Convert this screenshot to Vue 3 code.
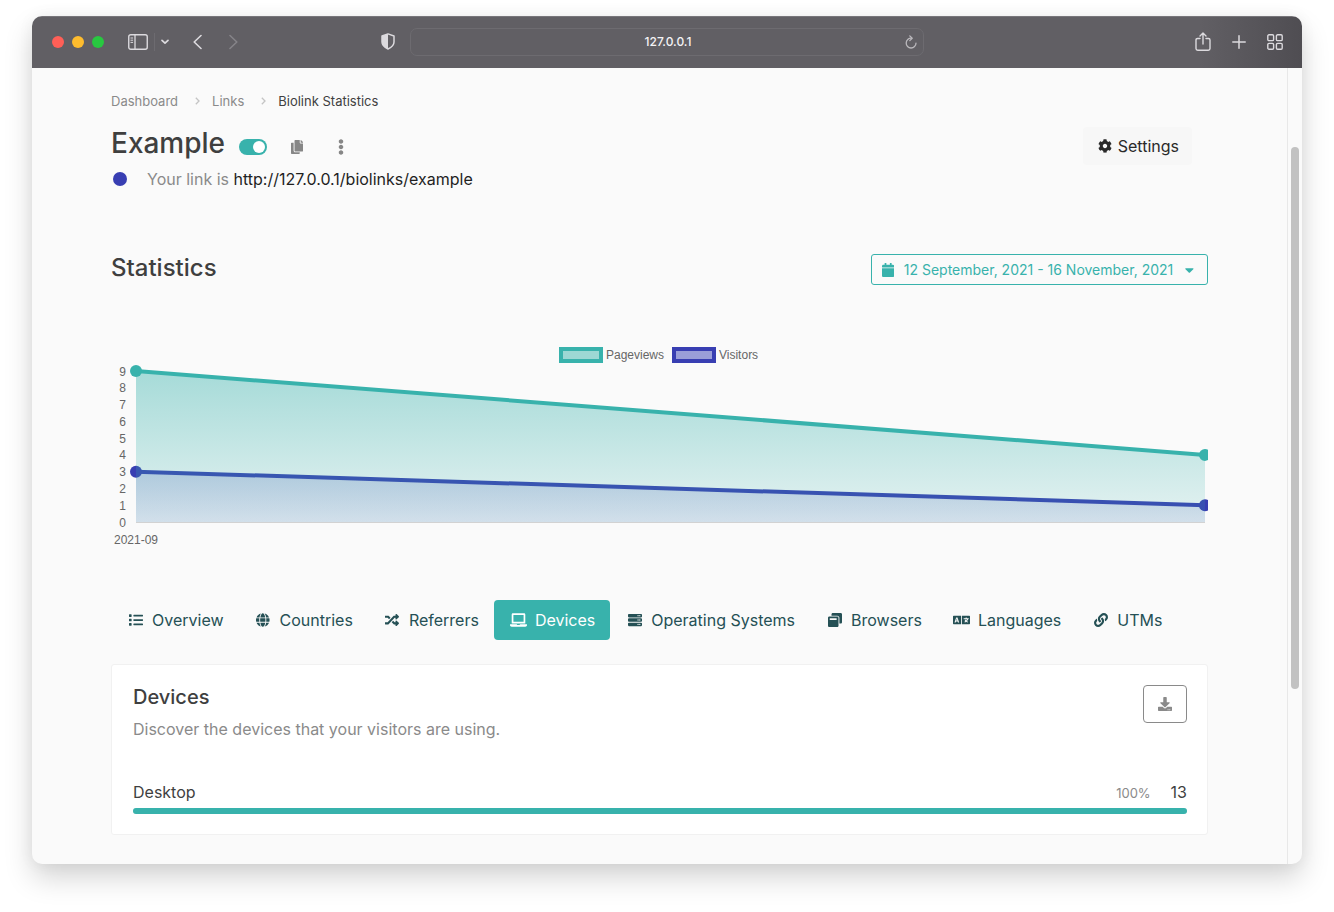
<script setup>
import { computed, ref } from 'vue'

const icons = {
  copy: { w: 448, d: 'M320 448v40c0 13.255-10.745 24-24 24H24c-13.255 0-24-10.745-24-24V120c0-13.255 10.745-24 24-24h72v296c0 30.879 25.121 56 56 56h168zm0-344V0H152c-13.255 0-24 10.745-24 24v368c0 13.255 10.745 24 24 24h272c13.255 0 24-10.745 24-24V128H344c-13.2 0-24-10.8-24-24zm120.971-31.029L375.029 7.029A24 24 0 0 0 358.059 0H352v96h96v-6.059a24 24 0 0 0-7.029-16.97z' },
  dots: { w: 192, d: 'M96 184c39.8 0 72 32.2 72 72s-32.2 72-72 72-72-32.2-72-72 32.2-72 72-72zM24 80c0 39.8 32.2 72 72 72s72-32.2 72-72S135.8 8 96 8 24 40.2 24 80zm0 352c0 39.8 32.2 72 72 72s72-32.2 72-72-32.2-72-72-72-72 32.2-72 72z' },
  cog: { w: 512, d: 'M487.4 315.7l-42.6-24.6c4.3-23.2 4.3-47 0-70.2l42.6-24.6c4.9-2.8 7.1-8.6 5.5-14-11.1-35.6-30-67.8-54.7-94.6-3.8-4.1-10-5.1-14.8-2.3L380.8 110c-17.9-15.4-38.5-27.3-60.8-35.1V25.8c0-5.6-3.9-10.5-9.4-11.7-36.7-8.2-74.3-7.8-109.2 0-5.5 1.2-9.4 6.1-9.4 11.7V75c-22.2 7.9-42.8 19.8-60.8 35.1L88.7 85.5c-4.9-2.8-11-1.9-14.8 2.3-24.7 26.7-43.6 58.9-54.7 94.6-1.7 5.4.6 11.2 5.5 14L67.3 221c-4.3 23.2-4.3 47 0 70.2l-42.6 24.6c-4.9 2.8-7.1 8.6-5.5 14 11.1 35.6 30 67.8 54.7 94.6 3.8 4.1 10 5.1 14.8 2.3l42.6-24.6c17.9 15.4 38.5 27.3 60.8 35.1v49.2c0 5.6 3.9 10.5 9.4 11.7 36.7 8.2 74.3 7.8 109.2 0 5.5-1.2 9.4-6.1 9.4-11.7v-49.2c22.2-7.9 42.8-19.8 60.8-35.1l42.6 24.6c4.9 2.8 11 1.9 14.8-2.3 24.7-26.7 43.6-58.9 54.7-94.6 1.5-5.5-.7-11.3-5.6-14.1zM256 336c-44.1 0-80-35.9-80-80s35.9-80 80-80 80 35.9 80 80-35.9 80-80 80z' },
  calendar: { w: 448, d: 'M12 192h424c6.6 0 12 5.4 12 12v260c0 26.5-21.5 48-48 48H48c-26.5 0-48-21.5-48-48V204c0-6.6 5.4-12 12-12zm436-44v-36c0-26.5-21.5-48-48-48h-48V12c0-6.6-5.4-12-12-12h-40c-6.6 0-12 5.4-12 12v52H160V12c0-6.6-5.4-12-12-12h-40c-6.6 0-12 5.4-12 12v52H48C21.5 64 0 85.5 0 112v36c0 6.6 5.4 12 12 12h424c6.6 0 12-5.4 12-12z' },
  caret: { w: 320, d: 'M31.3 192h257.3c17.8 0 26.7 21.5 14.1 34.1L174.1 354.8c-7.8 7.8-20.5 7.8-28.3 0L17.2 226.1C4.6 213.5 13.5 192 31.3 192z' },
  download: { w: 512, d: 'M216 0h80c13.3 0 24 10.7 24 24v168h87.7c17.8 0 26.7 21.5 14.1 34.1L269.7 378.3c-7.5 7.5-19.8 7.5-27.3 0L90.1 226.1c-12.6-12.6-3.7-34.1 14.1-34.1H192V24c0-13.3 10.7-24 24-24zm296 376v112c0 13.3-10.7 24-24 24H24c-13.3 0-24-10.7-24-24V376c0-13.3 10.7-24 24-24h146.7l49 49c20.1 20.1 52.5 20.1 72.6 0l49-49H488c13.3 0 24 10.7 24 24zm-124 88c0-11-9-20-20-20s-20 9-20 20 9 20 20 20 20-9 20-20zm64 0c0-11-9-20-20-20s-20 9-20 20 9 20 20 20 20-9 20-20z' },
  list: { w: 512, d: 'M80 368H16a16 16 0 0 0-16 16v64a16 16 0 0 0 16 16h64a16 16 0 0 0 16-16v-64a16 16 0 0 0-16-16zm0-320H16A16 16 0 0 0 0 64v64a16 16 0 0 0 16 16h64a16 16 0 0 0 16-16V64a16 16 0 0 0-16-16zm0 160H16a16 16 0 0 0-16 16v64a16 16 0 0 0 16 16h64a16 16 0 0 0 16-16v-64a16 16 0 0 0-16-16zm416 176H176a16 16 0 0 0-16 16v32a16 16 0 0 0 16 16h320a16 16 0 0 0 16-16v-32a16 16 0 0 0-16-16zm0-320H176a16 16 0 0 0-16 16v32a16 16 0 0 0 16 16h320a16 16 0 0 0 16-16V80a16 16 0 0 0-16-16zm0 160H176a16 16 0 0 0-16 16v32a16 16 0 0 0 16 16h320a16 16 0 0 0 16-16v-32a16 16 0 0 0-16-16z' },
  globe: { w: 496, d: 'M336.5 160C322 70.7 287.8 8 248 8s-74 62.7-88.5 152h177zM152 256c0 22.2 1.2 43.5 3.3 64h185.3c2.1-20.5 3.3-41.8 3.3-64s-1.2-43.5-3.3-64H155.3c-2.1 20.5-3.3 41.8-3.3 64zm324.7-96c-28.6-67.9-86.5-120.4-158-141.6 24.4 33.8 41.2 84.7 50 141.6h108zM177.2 18.4C105.8 39.6 47.8 92.1 19.3 160h108c8.7-56.9 25.5-107.8 49.9-141.6zM487.4 192H372.7c2.1 21 3.3 42.5 3.3 64s-1.2 43-3.3 64h114.6c5.5-20.5 8.6-41.8 8.6-64s-3.1-43.5-8.5-64zM120 256c0-21.5 1.2-43 3.3-64H8.6C3.2 212.5 0 233.8 0 256s3.2 43.5 8.6 64h114.6c-2-21-3.2-42.5-3.2-64zm39.5 96c14.5 89.3 48.7 152 88.5 152s74-62.7 88.5-152h-177zm159.3 141.6c71.4-21.2 129.4-73.7 158-141.6h-108c-8.8 56.9-25.6 107.8-50 141.6zM19.3 352c28.6 67.9 86.5 120.4 158 141.6-24.4-33.8-41.2-84.7-50-141.6h-108z' },
  random: { w: 512, d: 'M504.971 359.029c9.373 9.373 9.373 24.569 0 33.941l-80 79.984c-15.01 15.01-40.971 4.49-40.971-16.971V416h-58.785a12.004 12.004 0 0 1-8.773-3.812l-70.556-75.596 53.333-57.143L352 336h32v-39.981c0-21.438 25.943-31.998 40.971-16.971l80 79.981zM12 176h84l52.781 56.551 53.333-57.143-70.556-75.596A11.999 11.999 0 0 0 122.785 96H12c-6.627 0-12 5.373-12 12v56c0 6.627 5.373 12 12 12zm372 0v39.984c0 21.46 25.961 31.98 40.971 16.971l80-79.984c9.373-9.373 9.373-24.569 0-33.941l-80-79.981C409.943 24.021 384 34.582 384 56.019V96h-58.785a12.004 12.004 0 0 0-8.773 3.812L96 336H12c-6.627 0-12 5.373-12 12v56c0 6.627 5.373 12 12 12h110.785c3.326 0 6.503-1.381 8.773-3.812L352 176h32z' },
  laptop: { w: 640, d: 'M624 416H381.54c-.74 19.81-14.71 32-32.74 32H288c-18.69 0-33.02-17.47-32.77-32H16c-8.8 0-16 7.2-16 16v16c0 35.2 28.8 64 64 64h512c35.2 0 64-28.8 64-64v-16c0-8.8-7.2-16-16-16zM576 48c0-26.4-21.6-48-48-48H112C85.6 0 64 21.6 64 48v336h512V48zm-64 272H128V64h384v256z' },
  server: { w: 512, d: 'M480 160H32c-17.673 0-32-14.327-32-32V64c0-17.673 14.327-32 32-32h448c17.673 0 32 14.327 32 32v64c0 17.673-14.327 32-32 32zm-48-88c-13.255 0-24 10.745-24 24s10.745 24 24 24 24-10.745 24-24-10.745-24-24-24zm-64 0c-13.255 0-24 10.745-24 24s10.745 24 24 24 24-10.745 24-24-10.745-24-24-24zm112 248H32c-17.673 0-32-14.327-32-32v-64c0-17.673 14.327-32 32-32h448c17.673 0 32 14.327 32 32v64c0 17.673-14.327 32-32 32zm-48-88c-13.255 0-24 10.745-24 24s10.745 24 24 24 24-10.745 24-24-10.745-24-24-24zm-64 0c-13.255 0-24 10.745-24 24s10.745 24 24 24 24-10.745 24-24-10.745-24-24-24zm112 248H32c-17.673 0-32-14.327-32-32v-64c0-17.673 14.327-32 32-32h448c17.673 0 32 14.327 32 32v64c0 17.673-14.327 32-32 32zm-48-88c-13.255 0-24 10.745-24 24s10.745 24 24 24 24-10.745 24-24-10.745-24-24-24zm-64 0c-13.255 0-24 10.745-24 24s10.745 24 24 24 24-10.745 24-24-10.745-24-24-24z' },
  windows: { w: 512, d: 'M512 48v288c0 26.5-21.5 48-48 48h-48V176c0-44.1-35.9-80-80-80H128V48c0-26.5 21.5-48 48-48h288c26.5 0 48 21.5 48 48zM384 176v288c0 26.5-21.5 48-48 48H48c-26.5 0-48-21.5-48-48V176c0-26.5 21.5-48 48-48h288c26.5 0 48 21.5 48 48zm-68 28c0-6.6-5.4-12-12-12H76c-6.6 0-12 5.4-12 12v52h252v-52z' },
  language: { w: 640, d: 'M152.1 236.2c-3.5-12.1-7.8-33.2-7.8-33.2h-.5s-4.3 21.1-7.8 33.2l-11.1 37.5H163zM616 96H336v320h280c13.3 0 24-10.7 24-24V120c0-13.3-10.7-24-24-24zm-24 120c0 6.6-5.4 12-12 12h-11.4c-6.9 23.6-21.7 47.4-42.7 69.9 8.4 6.4 17.1 12.5 26.1 18 5.5 3.4 7.3 10.5 4.1 16.2l-7.9 13.9c-3.4 5.9-10.9 7.8-16.7 4.3-12.6-7.8-24.5-16.1-35.4-24.9-10.9 8.7-22.7 17.1-35.4 24.9-5.8 3.5-13.3 1.6-16.7-4.3l-7.9-13.9c-3.2-5.6-1.4-12.8 4.2-16.2 9.3-5.7 18-11.7 26.1-18-7.9-8.4-14.9-17-21-25.7-4-5.7-2.2-13.6 3.7-17.1l6.5-3.9 7.3-4.3c5.4-3.2 12.4-1.7 16 3.4 5 7 10.8 14 17.4 20.9 13.5-14.2 23.8-28.9 30-43.2H412c-6.6 0-12-5.4-12-12v-16c0-6.6 5.4-12 12-12h64v-16c0-6.6 5.4-12 12-12h16c6.6 0 12 5.4 12 12v16h64c6.6 0 12 5.4 12 12zM0 120v272c0 13.3 10.7 24 24 24h280V96H24c-13.3 0-24 10.7-24 24zm58.9 216.1L116.4 167c1.7-4.9 6.2-8.1 11.4-8.1h32.5c5.1 0 9.7 3.3 11.4 8.1l57.5 169.1c2.6 7.8-3.1 15.9-11.4 15.9h-22.9a12 12 0 0 1-11.5-8.6l-9.4-31.9h-60.2l-9.1 31.8c-1.5 5.1-6.2 8.7-11.5 8.7H70.3c-8.2 0-14-8.1-11.4-15.9z' },
  link: { w: 512, d: 'M326.612 185.391c59.747 59.809 58.927 155.698.36 214.59-.11.12-.24.25-.36.37l-67.2 67.2c-59.27 59.27-155.699 59.262-214.96 0-59.27-59.26-59.27-155.7 0-214.96l37.106-37.106c9.84-9.84 26.786-3.3 27.294 10.606.648 17.722 3.826 35.527 9.69 52.721 1.986 5.822.567 12.262-3.783 16.612l-13.087 13.087c-28.026 28.026-28.905 73.66-1.155 101.96 28.024 28.579 74.086 28.749 102.325.51l67.2-67.19c28.191-28.191 28.073-73.757 0-101.83-3.701-3.694-7.429-6.564-10.341-8.569a16.037 16.037 0 0 1-6.947-12.606c-.396-10.567 3.348-21.456 11.698-29.806l21.054-21.055c5.521-5.521 14.182-6.199 20.584-1.731a152.482 152.482 0 0 1 20.522 17.197zM467.547 44.449c-59.261-59.262-155.69-59.27-214.96 0l-67.2 67.2c-.12.12-.25.25-.36.37-58.566 58.892-59.387 154.781.36 214.59a152.454 152.454 0 0 0 20.521 17.196c6.402 4.468 15.064 3.789 20.584-1.731l21.054-21.055c8.35-8.35 12.094-19.239 11.698-29.806a16.037 16.037 0 0 0-6.947-12.606c-2.912-2.005-6.64-4.875-10.341-8.569-28.073-28.073-28.191-73.639 0-101.83l67.2-67.19c28.239-28.239 74.3-28.069 102.325.51 27.75 28.3 26.872 73.934-1.155 101.96l-13.087 13.087c-4.35 4.35-5.769 10.79-3.783 16.612 5.864 17.194 9.042 34.999 9.69 52.721.509 13.906 17.454 20.446 27.294 10.606l37.106-37.106c59.271-59.259 59.271-155.699.001-214.959z' },
}

const tabs = [
  { name: 'Overview', icon: 'list' },
  { name: 'Countries', icon: 'globe' },
  { name: 'Referrers', icon: 'random' },
  { name: 'Devices', icon: 'laptop' },
  { name: 'Operating Systems', icon: 'server' },
  { name: 'Browsers', icon: 'windows' },
  { name: 'Languages', icon: 'language' },
  { name: 'UTMs', icon: 'link' },
]
const active = ref('Devices')
const enabled = ref(true)
const address = ref('127.0.0.1')

const devices = [{ name: 'Desktop', percent: 100, count: 13 }]

const plot = { left: 25, right: 1094, top: 31, bottom: 182, max: 9 }
const ticks = Array.from({ length: 10 }, (_, i) => i)
const yOf = (v) => plot.bottom - (v * (plot.bottom - plot.top)) / plot.max

const series = computed(() =>
  [
    { key: 'visitors', color: '#383eb2', values: [3, 1] },
    { key: 'pageviews', color: '#38b2ac', values: [9, 4] },
  ].map((s) => {
    const pts = s.values.map((v, i) => [i ? plot.right : plot.left, yOf(v)])
    const line = pts.map((p) => p.join(',')).join(' ')
    return { ...s, pts, line, area: `${plot.left},${plot.bottom} ${line} ${plot.right},${plot.bottom}` }
  })
)
</script>

<template>
  <div class="desktop">
    <div class="window">
      <header class="toolbar">
        <div class="tools tools-left">
          <div class="lights">
            <button class="light red" aria-label="Close"></button>
            <button class="light yellow" aria-label="Minimize"></button>
            <button class="light green" aria-label="Zoom"></button>
          </div>
          <div class="sidebar-tools">
            <button class="tool" aria-label="Sidebar">
              <svg width="20" height="16" viewBox="0 0 20 16" fill="none" stroke="currentColor">
                <rect x="0.75" y="0.75" width="18.5" height="14.5" rx="2" stroke-width="1.4" />
                <path d="M7 1v14" stroke-width="1.3" />
                <path d="M2.5 4h2.6M2.5 6.2h2.6M2.5 8.4h2.6" stroke-width="1" />
              </svg>
            </button>
            <span class="divider"></span>
            <button class="tool" aria-label="Sidebar options">
              <svg width="8" height="6" viewBox="0 0 8 6" fill="none" stroke="currentColor" stroke-width="1.7" stroke-linecap="round" stroke-linejoin="round">
                <path d="M1 1.3l3 2.9 3-2.9" />
              </svg>
            </button>
          </div>
          <div class="history">
            <button class="tool" aria-label="Back">
              <svg width="9" height="16" viewBox="0 0 9 16" fill="none" stroke="currentColor" stroke-width="1.6" stroke-linecap="round" stroke-linejoin="round">
                <path d="M8 1.5L1.2 8 8 14.5" />
              </svg>
            </button>
            <button class="tool faded" aria-label="Forward">
              <svg width="9" height="16" viewBox="0 0 9 16" fill="none" stroke="currentColor" stroke-width="1.6" stroke-linecap="round" stroke-linejoin="round">
                <path d="M1 1.5L7.8 8 1 14.5" />
              </svg>
            </button>
          </div>
          <button class="tool shield" aria-label="Privacy report">
            <svg width="14" height="17" viewBox="0 0 14 17">
              <path d="M7 .9l6 2.1v6c0 3.2-2.6 5.4-6 7-3.4-1.6-6-3.8-6-7V3z" fill="none" stroke="currentColor" stroke-width="1.5" stroke-linejoin="round" />
              <path d="M7 .9v15.1c-3.4-1.6-6-3.8-6-7V3z" fill="currentColor" />
            </svg>
          </button>
        </div>
        <div class="address">
          <input v-model="address" type="text" aria-label="Address" />
          <button class="tool reload" aria-label="Reload">
            <svg width="12" height="14" viewBox="0 0 12 14" fill="none" stroke="currentColor" stroke-width="1.3" stroke-linecap="round" stroke-linejoin="round">
              <path d="M6.3 3.2a4.9 4.9 0 1 0 4.7 4.9" />
              <path d="M4.8 .9l2.4 2.3-2.4 2.4" />
            </svg>
          </button>
        </div>
        <div class="tools tools-right">
          <button class="tool" aria-label="Share">
            <svg width="16" height="20" viewBox="0 0 16 20" fill="none" stroke="currentColor" stroke-width="1.4" stroke-linecap="round" stroke-linejoin="round">
              <path d="M5 6.5H2.6C1.5 6.5 1 7 1 8v8.5c0 1 .6 1.7 1.7 1.7h10.6c1.1 0 1.7-.7 1.7-1.7V8c0-1-.5-1.5-1.6-1.5H11" />
              <path d="M8 12V1.2M5 4l3-2.9L11 4" />
            </svg>
          </button>
          <button class="tool" aria-label="New tab">
            <svg width="14" height="14" viewBox="0 0 14 14" fill="none" stroke="currentColor" stroke-width="1.5" stroke-linecap="round">
              <path d="M7 .8v12.4M.8 7h12.4" />
            </svg>
          </button>
          <button class="tool" aria-label="Tab overview">
            <svg width="16" height="16" viewBox="0 0 16 16" fill="none" stroke="currentColor" stroke-width="1.4">
              <rect x=".8" y=".8" width="5.8" height="5.8" rx="1.2" />
              <rect x="9.4" y=".8" width="5.8" height="5.8" rx="1.2" />
              <rect x=".8" y="9.4" width="5.8" height="5.8" rx="1.2" />
              <rect x="9.4" y="9.4" width="5.8" height="5.8" rx="1.2" />
            </svg>
          </button>
        </div>
      </header>

      <div class="viewport">
        <main class="page">
          <nav class="breadcrumb" aria-label="Breadcrumb">
            <a href="#">Dashboard</a>
            <svg width="5" height="8" viewBox="0 0 5 8"><path d="M.8 .8L4 4 .8 7.2" /></svg>
            <a href="#">Links</a>
            <svg width="5" height="8" viewBox="0 0 5 8"><path d="M.8 .8L4 4 .8 7.2" /></svg>
            <span class="current">Biolink Statistics</span>
          </nav>

          <section class="heading">
            <div class="title-row">
              <h1>Example</h1>
              <input v-model="enabled" class="switch" type="checkbox" aria-label="Link enabled" />
              <button class="plain" aria-label="Copy link">
                <svg class="icon" :viewBox="`0 0 ${icons.copy.w} 512`"><path :d="icons.copy.d" /></svg>
              </button>
              <button class="plain" aria-label="More actions">
                <svg class="icon tall" :viewBox="`0 0 ${icons.dots.w} 512`"><path :d="icons.dots.d" /></svg>
              </button>
            </div>
            <button class="settings">
              <svg class="icon" viewBox="0 0 512 512"><path :d="icons.cog.d" /></svg>
              Settings
            </button>
          </section>

          <p class="link-row">
            <span class="bullet"></span>
            <span>Your link is <a href="#">http://127.0.0.1/biolinks/example</a></span>
          </p>

          <section class="stats-head">
            <h2>Statistics</h2>
            <button class="range">
              <svg class="icon" viewBox="0 0 448 512"><path :d="icons.calendar.d" /></svg>
              <span>12 September, 2021 - 16 November, 2021</span>
              <svg class="icon" viewBox="0 0 320 512"><path :d="icons.caret.d" /></svg>
            </button>
          </section>

          <svg class="chart" viewBox="0 0 1097 210" role="img" aria-label="Pageviews and visitors">
            <defs>
              <linearGradient v-for="s in series" :id="s.key" :key="s.key" gradientUnits="userSpaceOnUse" x1="0" y1="0" x2="0" y2="210">
                <stop offset="0" :stop-color="s.color" stop-opacity="0.5" />
                <stop offset="1" :stop-color="s.color" stop-opacity="0.05" />
              </linearGradient>
            </defs>
            <g stroke-width="4">
              <rect x="450" y="9" width="40" height="12" fill="#9cd8d4" stroke="#38b2ac" />
              <rect x="563" y="9" width="40" height="12" fill="#9a9ed8" stroke="#383eb2" />
            </g>
            <text x="495" y="19">Pageviews</text>
            <text x="608" y="19">Visitors</text>
            <text v-for="t in ticks" :key="t" x="15" :y="yOf(t) + 4.5" text-anchor="end">{{ t }}</text>
            <text x="25" y="204" text-anchor="middle">2021-09</text>
            <line x1="25" y1="182.5" x2="1094" y2="182.5" stroke="#d2d2d2" />
            <g v-for="s in series" :key="s.key">
              <polyline :points="s.line" fill="none" :stroke="s.color" stroke-width="4" />
              <circle v-for="(p, i) in s.pts" :key="i" :cx="p[0]" :cy="p[1]" r="6" :fill="s.color" />
              <polygon :points="s.area" :fill="`url(#${s.key})`" />
            </g>
          </svg>

          <nav class="tabs" aria-label="Statistics sections">
            <a v-for="t in tabs" :key="t.name" href="#" :class="{ active: t.name === active }" @click.prevent="active = t.name">
              <span class="tab-icon">
                <svg class="icon" :viewBox="`0 0 ${icons[t.icon].w} 512`"><path :d="icons[t.icon].d" /></svg>
              </span>
              {{ t.name }}
            </a>
          </nav>

          <section class="card">
            <div class="card-head">
              <div>
                <h3>Devices</h3>
                <p>Discover the devices that your visitors are using.</p>
              </div>
              <button class="download" aria-label="Download">
                <svg class="icon" viewBox="0 0 512 512"><path :d="icons.download.d" /></svg>
              </button>
            </div>
            <div v-for="d in devices" :key="d.name" class="device">
              <div class="device-line">
                <span class="device-name">{{ d.name }}</span>
                <span class="percent">{{ d.percent }}%</span>
                <span class="count">{{ d.count }}</span>
              </div>
              <div class="track"><div class="fill" :style="{ width: d.percent + '%' }"></div></div>
            </div>
          </section>
        </main>
        <div class="scrollbar" aria-hidden="true"><div class="thumb"></div></div>
      </div>
    </div>
  </div>
</template>

<style>
html,
body {
  margin: 0;
  background: #fff;
}
</style>

<style scoped>
* {
  box-sizing: border-box;
}
.desktop {
  display: flex;
  min-height: 100vh;
  padding: 16px 32px 48px;
  font-family: Inter, "Liberation Sans", sans-serif;
  font-size: 16px;
  line-height: 24px;
  color: #3f3f3f;
}
.window {
  flex: 1;
  min-width: 0;
  display: flex;
  flex-direction: column;
  overflow: hidden;
  border-radius: 10px;
  background: #fafafa;
  box-shadow: 0 14px 28px rgba(0, 0, 0, 0.17), 0 0 16px rgba(0, 0, 0, 0.05);
}
button {
  display: inline-flex;
  align-items: center;
  justify-content: center;
  margin: 0;
  padding: 0;
  border: 0;
  background: none;
  font: inherit;
  color: inherit;
  cursor: pointer;
}
a {
  color: inherit;
  text-decoration: none;
}
h1,
h2,
h3,
p {
  margin: 0;
}
.icon {
  display: block;
  height: 14px;
  fill: currentColor;
}

.toolbar {
  display: grid;
  grid-template-columns: 1fr minmax(0, 514px) 1fr;
  align-items: center;
  height: 52px;
  padding-bottom: 2px;
  border-top: 1px solid #77757a;
  background: linear-gradient(90deg, #615f64 92%, #4f4d52);
  color: #dcdade;
}
.tools,
.lights,
.sidebar-tools,
.history {
  display: flex;
  align-items: center;
}
.tools-left {
  padding: 0 15px 0 20px;
}
.lights {
  gap: 8px;
}
.light {
  width: 12px;
  height: 12px;
  border-radius: 50%;
}
.red {
  background: #ff5f57;
}
.yellow {
  background: #febc2e;
}
.green {
  background: #28c840;
}
.sidebar-tools {
  gap: 6px;
  margin-left: 24px;
}
.divider {
  width: 1px;
  height: 18px;
  background: #6d6b70;
}
.history {
  gap: 27px;
  margin-left: 24px;
}
.faded {
  color: #858388;
}
.shield {
  margin-left: auto;
}
.address {
  display: flex;
  align-items: center;
  height: 28px;
  padding: 0 6px 0 20px;
  border: 1px solid #6d6b70;
  border-radius: 7px;
}
.address input {
  flex: 1;
  min-width: 0;
  padding: 0;
  border: 0;
  outline: 0;
  background: none;
  font: 500 12px/20px Inter, "Liberation Sans", sans-serif;
  color: #f4f3f5;
  text-align: center;
}
.reload {
  color: #bab8bc;
}
.tools-right {
  justify-content: flex-end;
  gap: 21px;
  padding-right: 19px;
}

.viewport {
  flex: 1;
  display: flex;
}
.page {
  flex: 1;
  min-width: 0;
  padding: 23px 79px 29px;
}
.breadcrumb {
  display: flex;
  align-items: center;
  font-size: 13px;
  line-height: 20px;
  color: #8a8a8a;
}
.breadcrumb svg {
  margin: 0 12px 0 17px;
  fill: none;
  stroke: #c4c4c4;
  stroke-width: 1.3;
}
.current {
  color: #3f3f3f;
}
.heading {
  display: flex;
  align-items: flex-end;
  justify-content: space-between;
  margin-top: 12px;
  padding-right: 16px;
}
.title-row {
  display: flex;
  align-items: center;
  height: 42px;
  padding-bottom: 2px;
}
h1 {
  font-size: 28px;
  line-height: 40px;
  font-weight: 500;
}
.switch {
  appearance: none;
  width: 28px;
  height: 16px;
  margin: 8px 0 0 14px;
  padding: 2px;
  border-radius: 8px;
  background: #b5b5b5;
  cursor: pointer;
}
.switch::before {
  content: "";
  display: block;
  width: 12px;
  height: 12px;
  border-radius: 50%;
  background: #fff;
}
.switch:checked {
  background: #38b2ac;
}
.switch:checked::before {
  margin-left: auto;
}
.plain {
  width: 20px;
  height: 20px;
  margin: 8px 0 0 20px;
  color: #868686;
}
.plain + .plain {
  margin-left: 24px;
}
.tall {
  height: 16px;
}
.settings {
  gap: 6px;
  height: 38px;
  padding: 0 13px 0 15px;
  border-radius: 4px;
  background: #f7f7f7;
  color: #2a2a2a;
}
.link-row {
  display: flex;
  align-items: center;
  gap: 20px;
  margin-top: 2px;
  color: #8a8a8a;
}
.link-row a {
  color: #1f1f1f;
}
.bullet {
  width: 14px;
  height: 14px;
  margin-left: 2px;
  border-radius: 50%;
  background: #383eb2;
}
.stats-head {
  display: flex;
  align-items: flex-end;
  justify-content: space-between;
  margin-top: 62px;
}
h2 {
  padding-bottom: 2px;
  font-size: 24px;
  line-height: 30px;
  font-weight: 500;
}
.range {
  gap: 10px;
  height: 31px;
  padding: 0 13px 0 10px;
  border: 1px solid #38b2ac;
  border-radius: 3px;
  font-size: 14px;
  color: #38b2ac;
}
.range span {
  padding-right: 2px;
}
.chart {
  display: block;
  width: 100%;
  height: auto;
  margin-top: 55px;
}
.chart text {
  font-family: "Liberation Sans", Arial, sans-serif;
  font-size: 12px;
  fill: #666;
}
.tabs {
  display: flex;
  flex-wrap: wrap;
  margin-top: 50px;
  color: #255055;
}
.tabs a {
  display: flex;
  align-items: center;
  gap: 8px;
  padding: 8px 15px 8px 16px;
  border-radius: 4px;
}
.tabs .active {
  background: #38b2ac;
  color: #fff;
}
.tab-icon {
  display: flex;
  justify-content: center;
  width: 17px;
}
.card {
  margin-top: 24px;
  padding: 20px 20px 20px 21px;
  border: 1px solid #f1f1f1;
  border-radius: 3px;
  background: #fff;
}
.card-head {
  display: flex;
  justify-content: space-between;
  align-items: flex-start;
}
h3 {
  font-size: 20px;
  line-height: 24px;
  font-weight: 500;
}
.card-head p {
  margin-top: 8px;
  color: #8a8a8a;
}
.download {
  width: 44px;
  height: 38px;
  border: 1px solid #8a8a8a;
  border-radius: 4px;
  color: #8a8a8a;
}
.device {
  margin-top: 39px;
}
.device-line {
  display: flex;
  align-items: baseline;
}
.device-name {
  flex: 1;
}
.percent {
  margin-right: 20px;
  font-size: 13px;
  color: #8a8a8a;
}
.track {
  height: 6px;
  margin-top: 3px;
  border-radius: 3px;
  background: #ededed;
}
.fill {
  height: 100%;
  border-radius: 3px;
  background: #38b2ac;
}
.scrollbar {
  display: grid;
  grid-template-rows: 79fr 542fr 175fr;
  width: 15px;
  padding: 0 3px;
  border-left: 1px solid #e8e8e8;
}
.thumb {
  grid-row: 2;
  border-radius: 4px;
  background: #c2c2c2;
}
</style>
